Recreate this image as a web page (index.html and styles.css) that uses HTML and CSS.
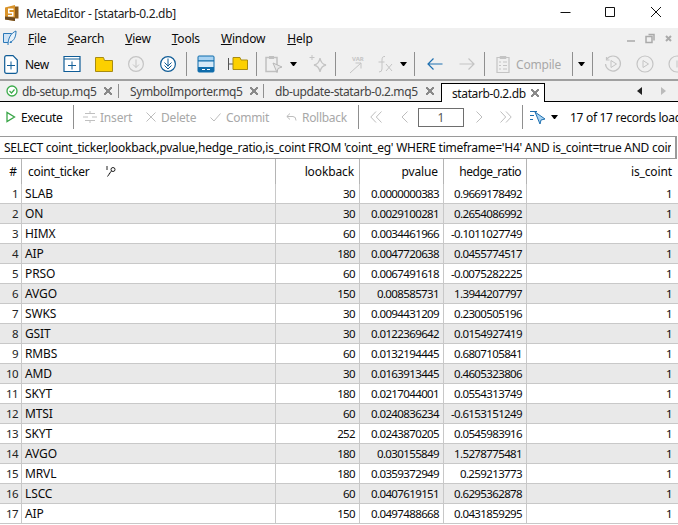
FILE: index.html
```html
<!DOCTYPE html>
<html lang="en">
<head>
<meta charset="utf-8">
<title>MetaEditor - [statarb-0.2.db]</title>
<link rel="stylesheet" href="styles.css">
</head>
<body>
<div class="app">
  <header class="titlebar">
    <svg class="app-logo" width="14" height="16" viewBox="0 0 14 16"><path d="M0 2.500 10 0v16l-10-1.500z" fill="#d9932a"/><path d="M10 1.500h3.500v12H10z" fill="#8a5a1c"/><path d="M0 11.500l10 1V16L0 14.500z" fill="#6b4a22"/><path d="M3 3.500h5.500v1.500H4.500v2H8.500v4.500H3V10h4V8.500H3z" fill="#fff"/></svg>
    <span class="title-text">MetaEditor - [statarb-0.2.db]</span>
    <div class="winbtns">
      <svg width="45" height="24" viewBox="0 0 45 24"><path d="M17.500 12.500h10" stroke="#111" fill="none"/></svg>
      <svg width="45" height="24" viewBox="0 0 45 24"><path d="M17.500 7.500h9v9h-9z" stroke="#111" fill="none"/></svg>
      <svg width="45" height="24" viewBox="0 0 45 24"><path d="M18 7l10 10M28 7 18 17" stroke="#111" fill="none"/></svg>
    </div>
  </header>

  <nav class="menubar">
    <svg class="menu-logo" width="14" height="16" viewBox="0 0 14 16"><path d="M.500 3.500h8v9h-8z" fill="#cfe3f5" stroke="#2a78b8"/><path d="M5 15c0-7 3-12 8-14 0 6-2 10-6 11" fill="#e8f2fa" stroke="#2a78b8"/></svg>
    <span class="menu-item"><u>F</u>ile</span>
    <span class="menu-item"><u>S</u>earch</span>
    <span class="menu-item"><u>V</u>iew</span>
    <span class="menu-item"><u>T</u>ools</span>
    <span class="menu-item"><u>W</u>indow</span>
    <span class="menu-item"><u>H</u>elp</span>
    <div class="mdi-btns">
      <svg width="10" height="12" viewBox="0 0 10 12"><path d="M1 9h8" stroke="#bbb" stroke-width="2"/></svg>
      <svg width="10" height="12" viewBox="0 0 10 12"><path d="M1 4.500h6v6H1z M3.500 2.500h5.500v6" stroke="#aaa" stroke-width="1.500" fill="none"/></svg>
      <svg width="10" height="12" viewBox="0 0 10 12"><path d="M2 4l5 5M7 4 2 9" stroke="#aaa" stroke-width="2"/></svg>
    </div>
  </nav>

  <div class="toolbar">
    <svg class="ic-new" width="14" height="19" viewBox="0 0 14 19"><path d="M.700 2.500q0-1.800 1.800-1.800h6.500l4.300 4.300v11.500q0 1.800-1.800 1.800h-9q-1.800 0-1.800-1.800z" fill="#fff" stroke="#0f5c96" stroke-width="1.200"/><path d="M7 6.500v8M3 10.500h8" stroke="#0f5c96"/></svg>
    <span class="tb-label new-label">New</span>
    <span class="slot"><svg width="18" height="18" viewBox="0 0 18 18"><path d="M1 1.500h16v15H1z" fill="#fff" stroke="#0f5c96" stroke-width="1.200"/><path d="M1 4h16" stroke="#0f5c96"/><path d="M9 6.500v8M5 10.500h8" stroke="#0f5c96"/></svg></span>
    <span class="slot"><svg width="18" height="16" viewBox="0 0 18 16"><path d="M.500 1.500h8l1 3h8v11H.500z" fill="#fcd000" stroke="#a98c10"/></svg></span>
    <span class="slot"><svg width="18" height="18" viewBox="0 0 18 18"><circle cx="9" cy="9" r="7.400" fill="none" stroke="#c4c4c4" stroke-width="1.200"/><path d="M9 4.500v8M6 9.500l3 3 3-3" fill="none" stroke="#c4c4c4"/></svg></span>
    <span class="slot"><svg width="18" height="18" viewBox="0 0 18 18"><circle cx="9" cy="9" r="7.400" fill="#fff" stroke="#0f5c96" stroke-width="1.200"/><path d="M9 3.500v8M5.500 7.500l3.500 3.500 3.500-3.500M5.500 10.500l3.500 3.500 3.500-3.500" fill="none" stroke="#0f5c96"/></svg></span>
    <i class="sep sep-a"></i>
    <span class="slot"><svg width="18" height="18" viewBox="0 0 18 18"><path d="M1 2q0-1 1-1h14q1 0 1 1v4H1z" fill="#a9d3f2" stroke="#0f6cab"/><path d="M1 6h16v10q0 1-1 1H2q-1 0-1-1z" fill="#d5e9f8" stroke="#0f6cab"/><path d="M1 12h16v4q0 1-1 1H2q-1 0-1-1z" fill="#0f6cab"/><path d="M5 14.500h3M10 14.500h3" stroke="#fff"/></svg></span>
    <span class="slot"><svg width="20" height="16" viewBox="0 0 20 16"><path d="M.500 2v12M.500 8H5" stroke="#555" fill="none"/><path d="M5 1.500h7l1 2.500h6.500v9.500H5z" fill="#fcd000" stroke="#a98c10"/></svg></span>
    <i class="sep sep-b"></i>
    <span class="slot narrow"><svg width="20" height="20" viewBox="0 0 20 20"><path d="M2 3.500h11v14H2z" fill="none" stroke="#c0c0c0" stroke-width="1.500"/><path d="M5 2h5v3H5z" fill="#c0c0c0"/><path d="M9 9l9 4-4 1.500-1 4z" fill="#e8e8e8" stroke="#b8b8b8"/></svg></span>
    <i class="caret caret-a"></i>
    <span class="slot star"><svg width="20" height="20" viewBox="0 0 20 20"><path d="M12 4q1 6 6 7-5 1-6 7-1-6-6-7 5-1 6-7z" fill="none" stroke="#c4c4c4" stroke-width="1.300"/><path d="M4 1v5M1.500 3.500h5" stroke="#c4c4c4"/></svg></span>
    <i class="sep sep-c"></i>
    <span class="slot var"><svg width="18" height="20" viewBox="0 0 18 20"><path d="M1 19 12 9M6.500 9H12v5.500" fill="none" stroke="#c4c4c4"/><text x="3" y="7" class="var-text">VAR</text></svg></span>
    <span class="slot fx"><svg width="18" height="20" viewBox="0 0 18 20"><path d="M8 2.500Q5 2 5 6v9q0 3-3 3M1.500 8h6" fill="none" stroke="#c4c4c4"/><path d="M9 10l6 7M15 10l-6 7" stroke="#c4c4c4"/></svg></span>
    <i class="caret caret-b"></i>
    <i class="sep sep-d"></i>
    <span class="slot back"><svg width="16" height="14" viewBox="0 0 16 14"><path d="M15.500 7H1M6.500 1.500 1 7l5.500 5.500" fill="none" stroke="#1f70b0" stroke-width="1.200"/></svg></span>
    <span class="slot back next"><svg width="16" height="14" viewBox="0 0 16 14"><path d="M.500 7H15M9.500 1.500 15 7l-5.500 5.500" fill="none" stroke="#c4c4c4" stroke-width="1.200"/></svg></span>
    <i class="sep sep-e"></i>
    <svg class="ic-compile" width="14" height="18" viewBox="0 0 14 18"><path d="M1 2.500h12v15H1z" fill="none" stroke="#c4c4c4" stroke-width="1.200"/><path d="M4 1.500h6v2H4zM3 7h2M7 7h4M3 10.500h2M7 10.500h4M3 14h2M7 14h4" fill="none" stroke="#c4c4c4"/></svg>
    <span class="tb-label disabled compile-label">Compile</span>
    <i class="sep sep-f"></i>
    <i class="caret caret-c"></i>
    <i class="sep sep-g"></i>
    <span class="slot play"><svg width="18" height="18" viewBox="0 0 18 18"><path d="M3 4a7.500 7.500 0 1 1-1.500 5M2.500 2v3h3" fill="none" stroke="#c4c4c4" stroke-width="1.200"/><path d="M7 5.500v7l5.500-3.500z" fill="none" stroke="#c4c4c4"/></svg></span>
    <span class="slot play"><svg width="18" height="18" viewBox="0 0 18 18"><circle cx="9" cy="9" r="8" fill="none" stroke="#c4c4c4" stroke-width="1.200"/><path d="M7 5.500v7l5.500-3.500z" fill="none" stroke="#c4c4c4"/></svg></span>
    <span class="slot play"><svg width="18" height="18" viewBox="0 0 18 18"><circle cx="9" cy="9" r="8" fill="none" stroke="#c4c4c4" stroke-width="1.200"/><path d="M9 5.500v7" stroke="#c4c4c4"/></svg></span>
  </div>

  <div class="tabs">
    <div class="tab first">
      <svg class="ok" width="12" height="12" viewBox="0 0 12 12"><circle cx="6" cy="6" r="5" fill="#fff" stroke="#3bab4a" stroke-width="1.300"/><path d="M3.500 6l2 2 3-3.500" fill="none" stroke="#3bab4a" stroke-width="1.200"/></svg>
      <span>db-setup.mq5</span><b class="x"></b>
    </div>
    <div class="tab"><span>SymbolImporter.mq5</span><b class="x"></b></div>
    <div class="tab"><span>db-update-statarb-0.2.mq5</span><b class="x"></b></div>
    <div class="tab active"><span>statarb-0.2.db</span><b class="x"></b></div>
    <div class="tab-arrows">
      <svg width="6" height="8" viewBox="0 0 6 8"><path d="M5 0v8L0 4z" fill="#222"/></svg>
      <svg width="6" height="8" viewBox="0 0 6 8"><path d="M1 0v8l5-4z" fill="#bbb"/></svg>
    </div>
  </div>

  <div class="actions">
    <svg class="ic-exec" width="10" height="12" viewBox="0 0 10 12"><path d="M1 1.500v9L8.500 6z" fill="#fff" stroke="#3aa648" stroke-width="1.300"/></svg>
    <span class="act-label l-exec">Execute</span>
    <i class="sep act-sep"></i>
    <svg class="ic-insert" width="14" height="14" viewBox="0 0 14 14"><path d="M2 3.500h10M2 10.500h10M0 7h5M14 7H9M7 1v3M7 10v3" stroke="#c0c0c0" fill="none"/></svg>
    <span class="act-label disabled l-insert">Insert</span>
    <svg class="ic-del" width="10" height="10" viewBox="0 0 10 10"><path d="M.500.500l9 9M9.500.500l-9 9" stroke="#bdbdbd"/></svg>
    <span class="act-label disabled l-del">Delete</span>
    <svg class="ic-check" width="11" height="9" viewBox="0 0 11 9"><path d="M.500 4.500l3.500 3.500 6.500-7.500" stroke="#bdbdbd" fill="none"/></svg>
    <span class="act-label disabled l-commit">Commit</span>
    <svg class="ic-undo" width="11" height="9" viewBox="0 0 11 9"><path d="M4 .500.800 3.500 4 6.500M1 3.500h6q3 0 3 4" stroke="#bdbdbd" fill="none"/></svg>
    <span class="act-label disabled l-roll">Rollback</span>
    <i class="sep act-sep2"></i>
    <svg class="ic-first" width="12" height="12" viewBox="0 0 12 12"><path d="M6 .500.800 6 6 11.500M11.500.500 6.300 6l5.200 5.500" fill="none" stroke="#bdbdbd"/></svg>
    <svg class="ic-prev" width="7" height="12" viewBox="0 0 7 12"><path d="M6.500.500 1 6l5.500 5.500" fill="none" stroke="#bdbdbd"/></svg>
    <span class="page-box">1</span>
    <svg class="ic-next" width="7" height="12" viewBox="0 0 7 12"><path d="M.500.500 6 6l-5.500 5.500" fill="none" stroke="#bdbdbd"/></svg>
    <svg class="ic-last" width="12" height="12" viewBox="0 0 12 12"><path d="M.500.500 5.700 6 .500 11.500M6 .500 11.200 6 6 11.500" fill="none" stroke="#bdbdbd"/></svg>
    <i class="sep act-sep3"></i>
    <svg class="ic-filter" width="16" height="14" viewBox="0 0 16 14"><path d="M0 1.500h7M0 5.500h4M0 9.500h3" stroke="#1f70b0"/><path d="M5 2l10 7-4 1-1 4z" fill="#a9d3f2" stroke="#1f70b0"/></svg>
    <i class="caret caret-d"></i>
    <span class="records">17 of 17 records loaded</span>
  </div>

  <div class="query"><span class="query-text">SELECT coint_ticker,lookback,pvalue,hedge_ratio,is_coint FROM 'coint_eg' WHERE timeframe='H4' AND is_coint=true AND coint_pvalue&lt;0.05</span></div>

  <table class="grid">
    <colgroup><col class="c0"><col class="c1"><col class="c2"><col class="c3"><col class="c4"><col class="c5"></colgroup>
    <thead>
      <tr>
        <th class="num">#</th>
        <th class="tick">coint_ticker<svg class="key" width="11" height="11" viewBox="0 0 11 11"><path d="M1 0v4M4 7 1.500 10.500" stroke="#222" fill="none"/><circle cx="7" cy="3.500" r="2" fill="none" stroke="#222"/><path d="M5.500 5 3 8" stroke="#222"/></svg></th>
        <th>lookback</th><th>pvalue</th><th class="wide">hedge_ratio</th><th>is_coint</th>
      </tr>
    </thead>
    <tbody>
      <tr><td class="num">1</td><td class="tick">SLAB</td><td>30</td><td>0.0000000383</td><td>0.9669178492</td><td>1</td></tr>
      <tr><td class="num">2</td><td class="tick">ON</td><td>30</td><td>0.0029100281</td><td>0.2654086992</td><td>1</td></tr>
      <tr><td class="num">3</td><td class="tick">HIMX</td><td>60</td><td>0.0034461966</td><td>-0.1011027749</td><td>1</td></tr>
      <tr><td class="num">4</td><td class="tick">AIP</td><td>180</td><td>0.0047720638</td><td>0.0455774517</td><td>1</td></tr>
      <tr><td class="num">5</td><td class="tick">PRSO</td><td>60</td><td>0.0067491618</td><td>-0.0075282225</td><td>1</td></tr>
      <tr><td class="num">6</td><td class="tick">AVGO</td><td>150</td><td>0.008585731</td><td>1.3944207797</td><td>1</td></tr>
      <tr><td class="num">7</td><td class="tick">SWKS</td><td>30</td><td>0.0094431209</td><td>0.2300505196</td><td>1</td></tr>
      <tr><td class="num">8</td><td class="tick">GSIT</td><td>30</td><td>0.0122369642</td><td>0.0154927419</td><td>1</td></tr>
      <tr><td class="num">9</td><td class="tick">RMBS</td><td>60</td><td>0.0132194445</td><td>0.6807105841</td><td>1</td></tr>
      <tr><td class="num">10</td><td class="tick">AMD</td><td>30</td><td>0.0163913445</td><td>0.4605323806</td><td>1</td></tr>
      <tr><td class="num">11</td><td class="tick">SKYT</td><td>180</td><td>0.0217044001</td><td>0.0554313749</td><td>1</td></tr>
      <tr><td class="num">12</td><td class="tick">MTSI</td><td>60</td><td>0.0240836234</td><td>-0.6153151249</td><td>1</td></tr>
      <tr><td class="num">13</td><td class="tick">SKYT</td><td>252</td><td>0.0243870205</td><td>0.0545983916</td><td>1</td></tr>
      <tr><td class="num">14</td><td class="tick">AVGO</td><td>180</td><td>0.030155849</td><td>1.5278775481</td><td>1</td></tr>
      <tr><td class="num">15</td><td class="tick">MRVL</td><td>180</td><td>0.0359372949</td><td>0.259213773</td><td>1</td></tr>
      <tr><td class="num">16</td><td class="tick">LSCC</td><td>60</td><td>0.0407619151</td><td>0.6295362878</td><td>1</td></tr>
      <tr><td class="num">17</td><td class="tick">AIP</td><td>150</td><td>0.0497488668</td><td>0.0431859295</td><td>1</td></tr>
    </tbody>
  </table>
</div>
</body>
</html>
```

FILE: styles.css
```css
* { box-sizing: border-box; }
html, body { margin: 0; padding: 0; width: 678px; height: 525px; overflow: hidden; background: #fff; }
body { font-family: "Noto Sans", "Open Sans", sans-serif; font-size: 12px; color: #0a0a0a; }
.app { width: 678px; height: 525px; overflow: hidden; display: flex; flex-direction: column; }
svg { flex: none; display: block; }

.titlebar { height: 28px; flex: none; display: flex; align-items: center; padding: 0 0 2px 5px; background: #fff; }
.title-text { margin-left: 7px; font-size: 12px; color: #222; letter-spacing: -.33px; white-space: nowrap; }
.winbtns { margin-left: auto; display: flex; align-self: flex-start; }

.menubar { height: 20px; flex: none; background: #f0f0f0; display: flex; align-items: center; padding-left: 3px; font-size: 12px; }
.menu-item { letter-spacing: -.2px; flex: none; }
.menu-item:nth-of-type(1) { margin-left: 11px; }
.menu-item:nth-of-type(2) { margin-left: 21px; }
.menu-item:nth-of-type(3) { margin-left: 21px; }
.menu-item:nth-of-type(4) { margin-left: 21px; }
.menu-item:nth-of-type(5) { margin-left: 21px; }
.menu-item:nth-of-type(6) { margin-left: 22px; }
.mdi-btns { margin-left: auto; display: flex; gap: 9px; padding-right: 4px; }

.toolbar { height: 33px; flex: none; background: #f0f0f0; display: flex; align-items: center; border-bottom: 2px solid #a0a0a0; padding: 1px 0 0 4px; overflow: hidden; }
.tb-label { font-size: 12px; letter-spacing: -.2px; flex: none; }
.new-label { margin-left: 7px; width: 23px; letter-spacing: -.5px; }
.disabled { color: #a8a8a8; }
.slot { width: 32px; display: flex; justify-content: center; flex: none; }
.new-label + .slot { margin-left: 8px; }
.sep { width: 1px; height: 24px; background: #8f8f8f; flex: none; display: block; }
.sep-a { margin-left: 2px; }
.sep-a + .slot { margin-left: 3px; }
.sep-b { margin-left: 2px; }
.slot.narrow { width: 24px; margin-left: 5px; }
.caret { width: 7px; height: 4px; border-left: 3.500px solid transparent; border-right: 3.500px solid transparent; border-top: 4px solid #000; flex: none; display: block; }
.caret-a { margin-left: 4px; }
.slot.star { width: 20px; margin-left: 11px; }
.sep-c { margin-left: 7px; }
.slot.var { width: 18px; margin-left: 13px; }
.slot.fx { width: 18px; margin-left: 10px; }
.caret-b { margin-left: 5px; }
.sep-d { margin-left: 7px; }
.slot.back { width: 16px; margin-left: 12px; }
.slot.back.next { margin-left: 16px; }
.sep-e { margin-left: 9px; }
.ic-compile { margin-left: 11px; }
.compile-label { margin-left: 6px; width: 46px; }
.sep-f { margin-left: 10px; }
.caret-c { margin-left: 5px; }
.sep-g { margin-left: 7px; }
.slot.play { width: 18px; margin-left: 14px; }
.sep-g + .slot.play { margin-left: 11px; }
.var-text { font-size: 6px; font-weight: 700; fill: #c4c4c4; }

.tabs { height: 21px; flex: none; background: #f0f0f0; border-bottom: 1px solid #000; display: flex; align-items: flex-end; }
.tab { display: flex; align-items: center; height: 20px; padding: 0 6px 0 11px; color: #444; position: relative; flex: none; }
.tab.first { padding: 0 7px 0 6px; }
.tab .ok { margin-right: 4px; }
.tab span { display: block; white-space: nowrap; letter-spacing: -.38px; }
.tab:nth-child(1) span { width: 75px; }
.tab:nth-child(2) span { width: 113px; }
.tab:nth-child(3) span { width: 144px; }
.tab .x { width: 8px; height: 8px; margin-left: 7px; flex: none; display: block; background: linear-gradient(45deg, transparent 39%, #8a8a8a 39%, #8a8a8a 61%, transparent 61%), linear-gradient(-45deg, transparent 39%, #8a8a8a 39%, #8a8a8a 61%, transparent 61%); }
.tab::after { content: ""; position: absolute; right: 0; top: 3px; bottom: 3px; width: 1px; background: #8f8f8f; }
.tab:nth-child(3) { padding-right: 7px; }
.tab:nth-child(3)::after, .tab.active::after { display: none; }
.tab.active { background: #fff; border: 1px solid #000; border-bottom: 0; height: 19px; margin-bottom: -1px; padding: 0 5px 0 10px; color: #111; }
.tab.active span { width: 74px; }
.tab.active .x { margin-left: 5px; }
.tab-arrows { margin-left: auto; display: flex; gap: 17px; padding-right: 12px; align-self: center; }

.actions { height: 34px; display: flex; align-items: center; background: #fff; flex: none; padding-bottom: 4px; }
.act-label { flex: none; white-space: nowrap; margin-left: 5px; }
.l-exec { width: 41px; letter-spacing: -.35px; }
.ic-exec { margin-left: 6px; }
.act-sep { margin-left: 11px; }
.ic-insert { margin-left: 9px; }
.l-insert { margin-left: 3px; width: 29px; letter-spacing: -.2px; }
.ic-del { margin-left: 17px; }
.l-del { width: 33px; letter-spacing: -.2px; }
.ic-check { margin-left: 16px; }
.l-commit { width: 44px; letter-spacing: -.3px; }
.ic-undo { margin-left: 16px; }
.l-roll { width: 46px; letter-spacing: -.3px; }
.act-sep2 { margin-left: 10px; }
.ic-first { margin-left: 11px; }
.ic-prev { margin-left: 19px; }
.page-box { width: 46px; height: 19px; margin-left: 10px; border: 1px solid #6e6e6e; text-align: center; line-height: 17px; color: #555; flex: none; }
.ic-next { margin-left: 12px; }
.ic-last { margin-left: 17px; }
.act-sep3 { margin-left: 10px; }
.ic-filter { margin-left: 7px; }
.caret-d { margin-left: 5px; }
.records { margin-left: 12px; white-space: nowrap; letter-spacing: -.3px; flex: none; }

.query { height: 23px; flex: none; border: 1px solid #9a9a9a; border-left: 0; border-right: 2px solid #9a9a9a; padding: 0 4px 0 4px; display: flex; align-items: center; overflow: hidden; background: #fff; margin-right: 1px; }
.query-text { white-space: nowrap; overflow: hidden; letter-spacing: -.26px; }

.grid { table-layout: fixed; width: 678px; border-collapse: separate; border-spacing: 0; flex: none; }
.c0 { width: 22px; } .c1 { width: 254px; } .c2 { width: 84px; } .c3 { width: 84px; } .c4 { width: 83px; } .c5 { width: 151px; }
.grid th { height: 25px; font-weight: 400; text-align: right; padding: 0 5px 0 0; border-right: 1px solid #b4b4b4; letter-spacing: -.12px; white-space: nowrap; }
.grid th.num { padding-right: 4px; }
.grid th.tick { text-align: left; padding-left: 6px; letter-spacing: -.25px; }
.grid th.wide { letter-spacing: -.5px; }
.grid th:last-child { border-right: 0; padding-right: 6px; }
.key { display: inline-block; margin-left: 16px; vertical-align: -1px; }
.grid td { height: 20px; padding: 1px 4px 0 0; text-align: right; border-bottom: 1px solid #c8c8c8; border-right: 1px solid #c8c8c8; white-space: nowrap; font-size: 11.5px; letter-spacing: -.62px; line-height: 18px; }
.grid td:last-child { border-right: 0; padding-right: 6px; }
.grid td.num { padding-right: 3px; color: #222; }
.grid td.tick { text-align: left; padding-left: 3px; font-size: 12px; letter-spacing: -.12px; }
.grid tbody tr:nth-child(even) td { background: #e9e9e9; }
```
